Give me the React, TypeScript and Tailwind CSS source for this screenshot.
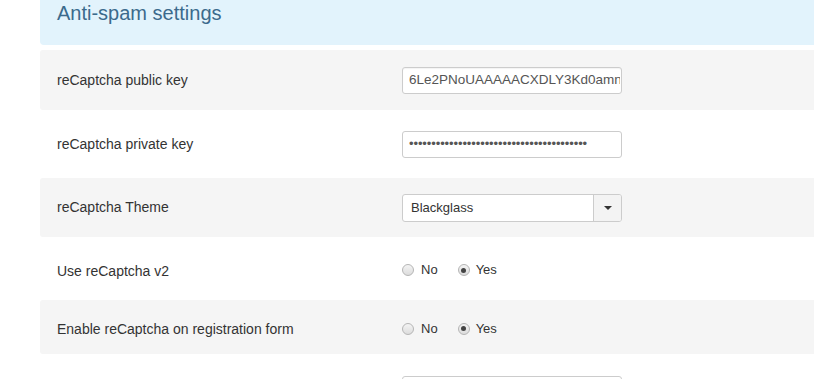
import React from "react";

function Radio({ checked }: { checked?: boolean }) {
  return (
    <span className="w-[12px] h-[12px] rounded-full border border-[#b5b5b5] bg-gradient-to-b from-[#f4f4f4] to-[#dcdcdc] flex items-center justify-center">
      {checked && <span className="w-[5px] h-[5px] rounded-full bg-[#444]" />}
    </span>
  );
}

function Radios() {
  return (
    <div className="flex items-center text-[13px] text-[#333]">
      <label className="flex items-center gap-[7px]">
        <Radio />
        <span>No</span>
      </label>
      <label className="flex items-center gap-[6px] ml-[20px]">
        <Radio checked />
        <span>Yes</span>
      </label>
    </div>
  );
}

function Row({ label, h, gray, lpt, children }: { label: string; h: string; gray?: boolean; lpt?: string; children?: React.ReactNode }) {
  return (
    <div className={`${h} ${gray ? "bg-[#f5f5f5]" : "bg-white"} rounded-l-[3px] flex items-center`}>
      <div className={`w-[362px] pl-[17px] text-[14px] text-[#333] ${lpt ?? ""}`}>{label}</div>
      <div>{children}</div>
    </div>
  );
}

export default function App() {
  return (
    <div className="w-[814px] h-[379px] overflow-hidden bg-white pl-[40px]" style={{ fontFamily: '"Liberation Sans", Arial, sans-serif' }}>
      <div className="h-[45px] bg-[#e2f3fc] rounded-bl-[4px] pl-[17px]">
        <h1 className="text-[20px] leading-[26px] text-[#3b6a8c]">Anti-spam settings</h1>
      </div>
      <div className="h-[5px]" />
      <Row label="reCaptcha public key" h="h-[60px]" gray>
        <div className="w-[220px] h-[27px] border border-[#ccc] rounded-[3px] bg-white overflow-hidden flex items-center pl-[6px] pr-[1px] text-[13.5px] text-[#555] whitespace-nowrap shadow-[inset_0_1px_1px_rgba(0,0,0,0.05)]">
          <span className="overflow-hidden">6Le2PNoUAAAAACXDLY3Kd0amnX</span>
        </div>
      </Row>
      <Row label="reCaptcha private key" h="h-[68px]">
        <div className="w-[220px] h-[27px] border border-[#ccc] rounded-[3px] bg-white overflow-hidden flex items-center pl-[6px] text-[13px] tracking-[-0.1px] text-[#555] whitespace-nowrap">
          ••••••••••••••••••••••••••••••••••••••••
        </div>
      </Row>
      <Row label="reCaptcha Theme" h="h-[59px]" gray>
        <div className="w-[220px] h-[28px] border border-[#ccc] rounded-[3px] bg-white overflow-hidden flex text-[13px] text-[#333]">
          <div className="flex-1 flex items-center pl-[8px]">Blackglass</div>
          <div className="w-[28px] border-l border-[#ccc] bg-[#f3f3f3] flex items-center justify-center">
            <span className="w-0 h-0 border-l-[4px] border-r-[4px] border-t-[4px] border-l-transparent border-r-transparent border-t-[#333]" />
          </div>
        </div>
      </Row>
      <Row label="Use reCaptcha v2" h="h-[63px]" lpt="pt-[5px]">
        <div className="pt-[3px]"><Radios /></div>
      </Row>
      <Row label="Enable reCaptcha on registration form" h="h-[54px]" gray lpt="pt-[5px]">
        <div className="pt-[3px]"><Radios /></div>
      </Row>
      <div className="h-[40px] bg-white flex items-start">
        <div className="ml-[362px] mt-[22px] w-[220px] h-[27px] border border-[#ccc] rounded-[3px]" />
      </div>
    </div>
  );
}
